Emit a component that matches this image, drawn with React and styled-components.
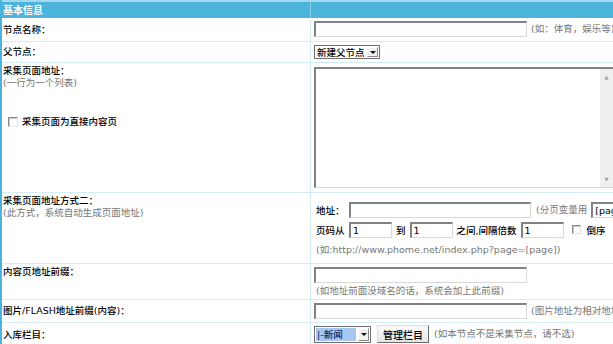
import React from 'react';
import styled, { createGlobalStyle } from 'styled-components';

const Global = createGlobalStyle`
  html, body { margin: 0; padding: 0; background: #fff; overflow: hidden; }
  body {
    font-family: "DejaVu Sans", "Noto Sans CJK SC", sans-serif;
    font-size: 9.5px;
    font-weight: 500;
    color: #000;
  }
`;

const Table = styled.div`
  width: 800px;
  min-height: 344px;
  border-left: 2px solid #4cb3db;
`;

const HeadRow = styled.div`
  display: grid;
  grid-template-columns: 309px 1fr;
  height: 16px;
  border-top: 2px solid #a3d9ee;
  background: #4cb3db;
`;

const HeadCell = styled.div`
  border-right: 1px solid #8fd0ea;
  color: #fff;
  font-weight: bold;
  font-size: 10px;
  line-height: 16px;
  padding-left: 1px;
  font-family: "Noto Sans CJK SC", sans-serif;
`;

const Row = styled.div`
  display: grid;
  grid-template-columns: 309px 1fr;
  border-bottom: 1px solid #d2edf6;
`;

const LabelCell = styled.div`
  border-right: 1px solid #d2edf6;
  padding: ${p => (p.$top ? '2px 0 0 1px' : '0 0 0 1px')};
  display: flex;
  flex-direction: column;
  justify-content: ${p => (p.$top ? 'flex-start' : 'center')};
  line-height: 12px;
  white-space: nowrap;
`;

const ValueCell = styled.div`
  padding: ${p => p.$pad};
  display: flex;
  flex-direction: column;
  gap: ${p => p.$gap || '0px'};
  white-space: nowrap;
  overflow: hidden;
`;

const Line = styled.div`
  display: flex;
  align-items: center;
  height: ${p => p.$h || 'auto'};
`;

const Gray = styled.span`
  color: #767676;
  font-weight: 400;
  line-height: 12px;
  margin-left: ${p => p.$ml || '0px'};
  font-size: ${p => p.$fs || '9.5px'};
`;

const Text = styled.span`
  margin: ${p => p.$m || '0'};
  width: ${p => p.$w || 'auto'};
  flex: none;
`;

const Input = styled.input`
  box-sizing: border-box;
  width: ${p => p.$w};
  height: 16px;
  margin: 0;
  padding: 0 2px;
  font: inherit;
  font-size: 9.5px;
  font-weight: 400;
  color: #000;
  background: #fff;
  border-style: solid;
  border-width: 2px 1px 1px 2px;
  border-color: #828282 #d9d9d9 #d9d9d9 #828282;
  outline: none;
  flex: none;
`;

const CheckBox = styled.span`
  box-sizing: border-box;
  display: inline-block;
  width: ${p => p.$s || '10px'};
  height: ${p => p.$s || '10px'};
  background: #fff;
  border-style: solid;
  border-width: 1px;
  border-color: #8a8a8a #e4e4e4 #e4e4e4 #8a8a8a;
  box-shadow: inset 1px 1px 0 #c8c8c8;
  flex: none;
`;

const CheckRow = styled.label`
  display: flex;
  align-items: center;
  gap: 4px;
  margin: 27px 0 0 5px;
  line-height: 12px;
`;

const SelectBox = styled.div`
  box-sizing: border-box;
  display: flex;
  align-items: center;
  width: ${p => p.$w};
  height: ${p => p.$h};
  border: 1px solid #6f6f6f;
  background: #fff;
  padding: 1px;
  flex: none;
`;

const SelectText = styled.span`
  flex: 1;
  height: 100%;
  display: flex;
  align-items: center;
  padding-left: 1px;
  background: ${p => (p.$active ? '#a6c7ef' : 'transparent')};
  color: ${p => (p.$active ? '#0d1f63' : '#000')};
`;

const Arrow = styled.span`
  box-sizing: border-box;
  width: 11px;
  height: ${p => p.$h || '11px'};
  margin-left: 2px;
  background: #f1f1f1;
  border-style: solid;
  border-width: 1px;
  border-color: #fff #8a8a8a #8a8a8a #fff;
  display: flex;
  align-items: center;
  justify-content: center;
  &::after {
    content: "";
    border-left: 3px solid transparent;
    border-right: 3px solid transparent;
    border-top: 3px solid #111;
  }
`;

const Button = styled.button`
  box-sizing: border-box;
  width: 52px;
  height: 18px;
  margin: 0 0 0 6px;
  padding: 0;
  font-family: "Noto Sans CJK SC", sans-serif;
  font-size: 10px;
  font-weight: 500;
  color: #000;
  background: linear-gradient(#fafafa, #e6e6e6);
  border-style: solid;
  border-width: 1px;
  border-color: #dcdcdc #6a6a6a #6a6a6a #dcdcdc;
  flex: none;
`;

const AreaBox = styled.div`
  box-sizing: border-box;
  display: flex;
  width: 300px;
  height: 121px;
  border-style: solid;
  border-width: 2px 1px 1px 2px;
  border-color: #828282 #d9d9d9 #d9d9d9 #828282;
  background: #fff;
  flex: none;
`;

const Area = styled.textarea`
  flex: 1;
  border: none;
  margin: 0;
  padding: 0;
  resize: none;
  outline: none;
  background: transparent;
`;

const Track = styled.div`
  width: 13px;
  background: #efefef;
  display: flex;
  flex-direction: column;
  justify-content: space-between;
  align-items: center;
  padding: 5px 0;
  color: #9a9a9a;
  font-size: 5px;
  line-height: 6px;
`;

export default function App() {
  return (
    <>
      <Global />
      <Table>
        <HeadRow>
          <HeadCell>基本信息</HeadCell>
          <HeadCell />
        </HeadRow>

        <Row>
          <LabelCell>节点名称：</LabelCell>
          <ValueCell $pad="3px 3px 4px">
            <Line>
              <Input $w="213px" />
              <Gray $ml="4px">(如：体育，娱乐等)</Gray>
            </Line>
          </ValueCell>
        </Row>

        <Row>
          <LabelCell>父节点：</LabelCell>
          <ValueCell $pad="3px 3px 3px">
            <Line>
              <SelectBox $w="66px" $h="14px">
                <SelectText>新建父节点</SelectText>
                <Arrow $h="10px" />
              </SelectBox>
            </Line>
          </ValueCell>
        </Row>

        <Row>
          <LabelCell $top>
            <span>采集页面地址：</span>
            <Gray>(一行为一个列表)</Gray>
            <CheckRow>
              <CheckBox />
              <span>采集页面为直接内容页</span>
            </CheckRow>
          </LabelCell>
          <ValueCell $pad="4px 3px 4px">
            <AreaBox>
              <Area />
              <Track>
                <span>▲</span>
                <span>▼</span>
              </Track>
            </AreaBox>
          </ValueCell>
        </Row>

        <Row>
          <LabelCell $top>
            <span>采集页面地址方式二：</span>
            <Gray>(此方式，系统自动生成页面地址)</Gray>
          </LabelCell>
          <ValueCell $pad="7px 3px 3px">
            <Line $h="20px">
              <Text $m="0 0 0 2px" $w="33px">地址：</Text>
              <Input $w="182px" />
              <Gray $ml="5px">(分页变量用</Gray>
              <Input $w="70px" defaultValue="[page]" style={{ marginLeft: 4 }} />
            </Line>
            <Line $h="20px">
              <Text $m="0 0 0 2px" $w="33px">页码从</Text>
              <Input $w="43px" defaultValue="1" />
              <Text $m="0 4px">到</Text>
              <Input $w="43px" defaultValue="1" />
              <Text $m="0 4px">之间,间隔倍数</Text>
              <Input $w="43px" defaultValue="1" />
              <Text $m="0 0 0 8px"><CheckBox $s="9px" /></Text>
              <Text $m="0 0 0 6px">倒序</Text>
            </Line>
            <Line $h="20px">
              <Gray $ml="2px">(如:http://www.phome.net/index.php?page=[page])</Gray>
            </Line>
          </ValueCell>
        </Row>

        <Row>
          <LabelCell $top>
            <span>内容页地址前缀：</span>
          </LabelCell>
          <ValueCell $pad="3px 3px 2px" $gap="2px">
            <Line>
              <Input $w="213px" />
            </Line>
            <Gray $ml="2px">(如地址前面没域名的话，系统会加上此前缀)</Gray>
          </ValueCell>
        </Row>

        <Row>
          <LabelCell>图片/FLASH地址前缀(内容)：</LabelCell>
          <ValueCell $pad="3px 3px 3px">
            <Line>
              <Input $w="213px" />
              <Gray $ml="4px">(图片地址为相对地址时使用)</Gray>
            </Line>
          </ValueCell>
        </Row>

        <Row>
          <LabelCell>入库栏目：</LabelCell>
          <ValueCell $pad="2px 3px 3px">
            <Line>
              <SelectBox $w="57px" $h="17px">
                <SelectText $active>|-新闻</SelectText>
                <Arrow $h="13px" />
              </SelectBox>
              <Button>管理栏目</Button>
              <Gray $ml="5px">(如本节点不是采集节点，请不选)</Gray>
            </Line>
          </ValueCell>
        </Row>
      </Table>
    </>
  );
}
